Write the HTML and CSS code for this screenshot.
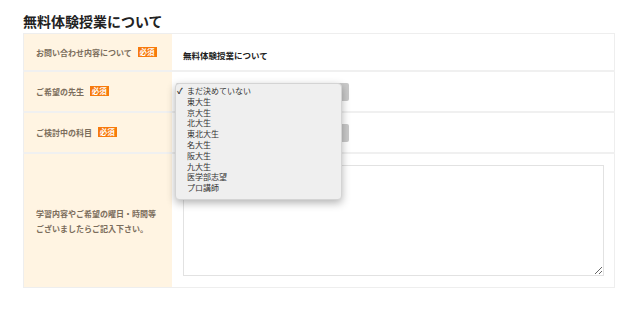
FILE: index.html
```html
<!DOCTYPE html>
<html>
<head>
    <meta charset="UTF-8">
    <title>無料体験授業について</title>
    <link rel="stylesheet" href="styles.css">
</head>
<body>
    <div class="container">
        <h2 class="title">無料体験授業について</h2>
        <div class="form">
            <table class="form-table">
                <tr class="row-1">
                    <th>お問い合わせ内容について <span class="must">必須</span></th>
                    <td><span class="value">無料体験授業について</span></td>
                </tr>
                <tr class="row-2">
                    <th>ご希望の先生 <span class="must">必須</span></th>
                    <td><div class="select"></div></td>
                </tr>
                <tr class="row-3">
                    <th>ご検討中の科目 <span class="must">必須</span></th>
                    <td><div class="select"></div></td>
                </tr>
                <tr class="row-4">
                    <th>学習内容やご希望の曜日・時間等<br>ございましたらご記入下さい。</th>
                    <td><textarea class="memo"></textarea></td>
                </tr>
            </table>
            <ul class="popup">
                <li class="checked">まだ決めていない</li>
                <li>東大生</li>
                <li>京大生</li>
                <li>北大生</li>
                <li>東北大生</li>
                <li>名大生</li>
                <li>阪大生</li>
                <li>九大生</li>
                <li>医学部志望</li>
                <li>プロ講師</li>
            </ul>
        </div>
    </div>
</body>
</html>
```
FILE: styles.css
```css
* {
    margin: 0;
    padding: 0;
}
body {
    background: #fff;
    font-family: "Noto Sans CJK JP", "Noto Sans", sans-serif;
}
.container {
    width: 592px;
    padding: 11px 0 0 23px;
}
.title {
    font-size: 14px;
    line-height: 21px;
    font-weight: bold;
    color: #222;
}
.form {
    position: relative;
    margin-top: 1px;
}
.form-table {
    width: 592px;
    border-collapse: collapse;
    border: 1px solid #eee;
}
.form-table th,
.form-table td {
    border-top: 2px solid #f0f0f0;
    vertical-align: middle;
}
.form-table tr.row-1 th,
.form-table tr.row-1 td {
    border-top: 0;
}
.form-table th {
    width: 136px;
    padding-left: 12px;
    background: #fff4e2;
    text-align: left;
    font-size: 8px;
    line-height: 15px;
    font-weight: bold;
    color: #7b6d5c;
}
.form-table td {
    padding-left: 11px;
}
.row-1 th, .row-1 td { height: 36px; }
.row-2 th, .row-2 td { height: 39px; }
.row-3 th, .row-3 td { height: 39px; }
.row-4 th, .row-4 td { height: 133px; }
.must {
    display: inline-block;
    margin-left: 4px;
    padding: 0 2px;
    background: #f77a0c;
    color: #fff;
    font-size: 7.5px;
    line-height: 10px;
    vertical-align: 1px;
}
.value {
    font-size: 8.5px;
    font-weight: bold;
    color: #222;
}
.select {
    width: 173px;
    height: 18px;
    margin-left: -7px;
    background: #c9c9c9;
    border-radius: 2px;
}
.memo {
    display: block;
    width: 419px;
    height: 109px;
    border: 1px solid #e2e2e2;
    resize: vertical;
}
.popup {
    position: absolute;
    left: 152px;
    top: 50px;
    width: 165px;
    padding: 2px 0 5px;
    list-style: none;
    background: #efefef;
    border: 1px solid #d4d4d4;
    border-radius: 4px;
    box-shadow: 0 3px 8px rgba(0, 0, 0, 0.3);
}
.popup li {
    padding-left: 11px;
    font-size: 8px;
    line-height: 10.8px;
    color: #333;
}
.popup li.checked {
    padding-left: 1px;
}
.popup li.checked::before {
    content: "✓";
    display: inline-block;
    width: 10px;
    font-weight: bold;
}
```
